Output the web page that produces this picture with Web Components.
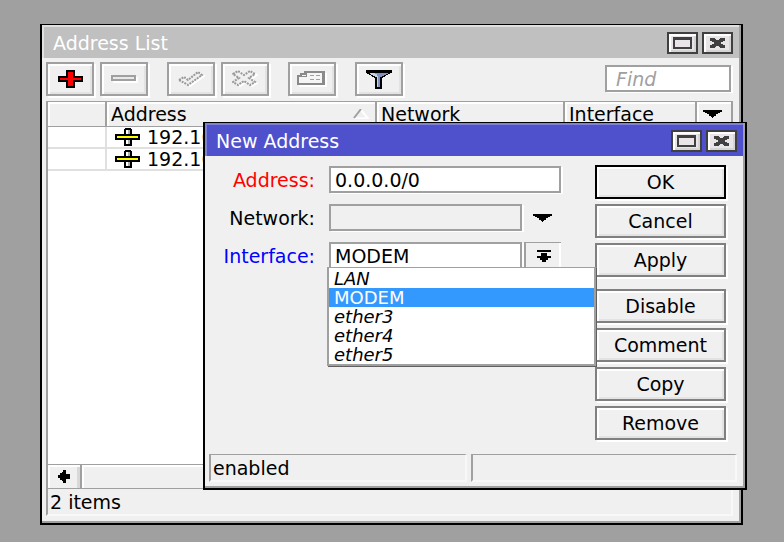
<!DOCTYPE html>
<html lang="en">
<head>
<meta charset="utf-8">
<title>Address List</title>
<style>
    html {
        height: 100%;
    }
    body {
        background: #a0a0a0;
        box-sizing: border-box;
        color: #000;
        display: flex;
        font: 19px/24px "DejaVu Sans", sans-serif;
        height: 100%;
        margin: 0;
        padding: 24px 41px 17px 40px;
    }
    address-list {
        flex: 1;
    }
    address-dialog {
        left: 203px;
        position: absolute;
        right: 37px;
        top: 122px;
    }
</style>
</head>
<body>

<address-list></address-list>
<address-dialog></address-dialog>

<script>
class WinFrameElement extends HTMLElement {
    constructor() {
        super();

        this.attachShadow({ mode: 'open' });

        this.shadowRoot.innerHTML = `
          <style>
              :host {
                background: #f0f0f0;
                border: 2px solid #000;
                border-top-width: 1px;
                box-shadow: inset -2px -2px #a0a0a0;
                box-sizing: border-box;
                display: flex;
                flex-direction: column;
                padding: 0 2px 2px 0;
              }
              .title {
                align-items: center;
                background: var(--title-background, #c0c0c0);
                border-left: 2px solid var(--title-highlight, #e0e0e0);
                border-top: 2px solid var(--title-highlight, #e0e0e0);
                color: #fff;
                display: flex;
                gap: 4px;
                height: 31px;
                padding: 0 6px 0 9px;
              }
              .title__text {
                flex: 1;
                font: inherit;
                margin: 0;
              }
              button {
                align-items: center;
                background: #e8e4e8;
                border: 2px solid #404040;
                box-shadow: inset 2px 2px #fff, inset -2px -2px #d4d4d4;
                display: flex;
                height: 22px;
                justify-content: center;
                padding: 0;
                width: 31px;
              }
          </style>

          <header class="title">
            <h1 class="title__text"></h1>
            <button type="button" aria-label="Maximize">
              <svg width="19" height="12" shape-rendering="crispEdges"><path d="M0 0h19v12h-19zM2 3v7h15v-7z" fill="#404040" fill-rule="evenodd"/></svg>
            </button>
            <button type="button" aria-label="Close">
              <svg width="15" height="10" shape-rendering="crispEdges"><path d="M0 0h5v1h1v1h3v-1h1v-1h5v3h-2v1h-2v2h2v1h2v3h-5v-1h-1v-1h-3v1h-1v1h-5v-3h2v-1h2v-2h-2v-1h-2z" fill="#404040"/></svg>
            </button>
          </header>
          <slot></slot>
        `;
    }

    connectedCallback() {
        this.shadowRoot.querySelector('.title__text').textContent = this.getAttribute('heading');
    }
}

class ToolButtonElement extends HTMLElement {
    constructor() {
        super();

        this.attachShadow({ mode: 'open' });

        this.shadowRoot.innerHTML = `
          <style>
              :host {
                display: block;
              }
              button {
                align-items: center;
                background: #f0f0f0;
                border: 2px solid var(--button-border, #a0a0a0);
                box-shadow: inset 2px 2px #fff, inset -2px -2px #e3e3e3, 2px 2px #fff;
                color: inherit;
                display: flex;
                font: inherit;
                height: 34px;
                justify-content: center;
                padding: 0;
                width: 100%;
              }
          </style>

          <button type="button"><slot></slot></button>
        `;
    }

    connectedCallback() {
        const label = this.getAttribute('label');
        if (label) {
            this.shadowRoot.querySelector('button').setAttribute('aria-label', label);
        }
    }
}

class StatusCellElement extends HTMLElement {
    constructor() {
        super();

        this.attachShadow({ mode: 'open' });

        this.shadowRoot.innerHTML = `
          <style>
              :host {
                border: 2px solid #f8f8f8;
                border-left-color: #a0a0a0;
                border-top: 1px solid #a0a0a0;
                box-sizing: border-box;
                display: block;
                height: 28px;
                padding: 1px 2px;
              }
          </style>

          <slot></slot>
        `;
    }
}

class AddressTableElement extends HTMLElement {
    constructor() {
        super();

        const port = `<svg width="25" height="18" shape-rendering="crispEdges"><path d="M10 0h6v1h1v17h-8v-17h1z"/><path d="M11 2h2v14h-2z" fill="#fff"/><path d="M13 2h2v14h-2z" fill="#b0b0b0"/><path d="M0 6h25v6h-25z"/><path d="M2 8h21v2h-21z" fill="#ff0"/></svg>`;

        this.attachShadow({ mode: 'open' });

        this.shadowRoot.innerHTML = `
          <style>
              :host {
                background: #fff;
                border-left: 2px solid #a0a0a0;
                border-top: 1px solid #a0a0a0;
                box-sizing: border-box;
                display: flex;
                flex-direction: column;
              }
              table {
                border-collapse: separate;
                border-spacing: 0;
                table-layout: fixed;
                width: 100%;
              }
              .flag { width: 59px; }
              .address { width: 270px; }
              .network { width: 188px; }
              .more { width: 36px; }
              th, td {
                box-sizing: border-box;
                font-weight: normal;
                padding: 0 0 0 4px;
                text-align: left;
                white-space: nowrap;
              }
              th {
                background: #f0f0f0;
                border-bottom: 1px solid #a0a0a0;
                border-right: 2px solid #a0a0a0;
                box-shadow: inset 2px 2px #fff;
                height: 25px;
              }
              td {
                border-bottom: 2px solid #e0e0e0;
                height: 22px;
                line-height: 20px;
              }
              td:first-child {
                border-right: 2px solid #e0e0e0;
              }
              .heading, .entry {
                align-items: center;
                display: flex;
                gap: 7px;
              }
              .heading {
                justify-content: space-between;
                padding-right: 6px;
              }
              .entry {
                padding-left: 4px;
              }
              .rows {
                flex: 1;
              }
              .scroll {
                border-top: 1px solid #a0a0a0;
                display: flex;
                height: 23px;
              }
              .scroll button, .menu {
                align-items: center;
                background: #f0f0f0;
                border: 0;
                display: flex;
                justify-content: center;
                padding: 0;
              }
              .scroll button {
                border-right: 2px solid #a0a0a0;
                box-shadow: inset 2px 2px #fff, inset -3px 0 #d8d8d8;
                width: 34px;
              }
              .menu {
                background: none;
                padding-left: 2px;
              }
              .track {
                background: #f0f0f0;
                box-shadow: inset 2px 2px #fff;
                flex: 1;
              }
          </style>

          <div class="rows">
            <table>
              <thead>
                <tr>
                  <th class="flag"></th>
                  <th class="address"><span class="heading">Address <svg width="16" height="10"><path d="M8 1L15 9.5H1" fill="none" stroke="#fff" stroke-width="2"/><path d="M8 0L1 9" fill="none" stroke="#a0a0a0" stroke-width="2"/></svg></span></th>
                  <th class="network">Network</th>
                  <th>Interface</th>
                  <th class="more">
                    <button class="menu" type="button" aria-label="Columns"><svg width="19" height="8" shape-rendering="crispEdges"><path d="M0 0h19v2h-2v1h-2v1h-2v2h-2v1h-1v1h-1v-1h-1v-1h-2v-2h-2v-1h-2v-1h-2z"/></svg></button>
                  </th>
                </tr>
              </thead>
              <tbody>
                <tr><td></td><td><span class="entry">${port}192.16</span></td><td></td><td></td><td></td></tr>
                <tr><td></td><td><span class="entry">${port}192.16</span></td><td></td><td></td><td></td></tr>
              </tbody>
            </table>
          </div>
          <div class="scroll">
            <button type="button" aria-label="Scroll left"><svg width="12" height="13" shape-rendering="crispEdges"><path d="M5 0h3v4h4v5h-4v4h-3v-2h-1v-1h-2v-2h-2v-3h2v-2h2v-1h1z"/></svg></button>
            <div class="track"></div>
          </div>
        `;
    }
}

class AddressListElement extends HTMLElement {
    constructor() {
        super();

        this.attachShadow({ mode: 'open' });

        this.shadowRoot.innerHTML = `
          <style>
              :host {
                display: flex;
              }
              win-frame {
                flex: 1;
              }
              .toolbar {
                display: flex;
                gap: 19px;
                padding: 4px 8px 5px 4px;
              }
              .group {
                display: flex;
                gap: 6px;
              }
              tool-button {
                width: 48px;
              }
              input {
                border: 2px solid #a0a0a0;
                box-shadow: 2px 1px #fff;
                box-sizing: border-box;
                font: inherit;
                font-style: italic;
                height: 27px;
                margin: 3px 0 0 auto;
                padding: 0 9px;
                width: 126px;
              }
              input::placeholder {
                color: #a0a0a0;
                opacity: 1;
              }
              address-table {
                flex: 1;
                margin: 0 6px 0 4px;
              }
              status-cell {
                margin: 0 6px 5px 4px;
              }
          </style>

          <win-frame heading="Address List">
            <div class="toolbar">
              <div class="group">
                <tool-button label="Add">
                  <svg width="25" height="18" shape-rendering="crispEdges"><path d="M8 0h9v6h8v6h-8v6h-9v-6h-8v-6h8z"/><path d="M10 2h5v14h-5z" fill="#f00"/><path d="M2 8h21v2h-21z" fill="#f00"/></svg>
                </tool-button>
                <tool-button label="Remove">
                  <svg width="27" height="8" shape-rendering="crispEdges"><path d="M2 2h25v6h-25z" fill="#fff"/><path d="M1 1h23v4h-23z" fill="#e8e8e8" stroke="#a0a0a0" stroke-width="2"/></svg>
                </tool-button>
              </div>
              <div class="group">
                <tool-button label="Enable">
                  <svg width="27" height="17"><path d="M1 9l5-3 4 3L20 1l4 3L10 14z" transform="translate(2 1)" fill="none" stroke="#fff" stroke-width="2"/><path d="M1 9l5-3 4 3L20 1l4 3L10 14z" fill="#f0f0f0" stroke="#999" stroke-width="2" stroke-dasharray="2 1"/></svg>
                </tool-button>
                <tool-button label="Disable">
                  <svg width="26" height="18"><path d="M1 4l5-3 6 4 6-4 5 3-6 4 6 4-5 3-6-4-6 4-5-3 6-4z" transform="translate(2 1)" fill="none" stroke="#fff" stroke-width="2"/><path d="M1 4l5-3 6 4 6-4 5 3-6 4 6 4-5 3-6-4-6 4-5-3 6-4z" fill="#f0f0f0" stroke="#999" stroke-width="2" stroke-dasharray="2 1"/></svg>
                </tool-button>
              </div>
              <tool-button label="Comment">
                <svg width="30" height="16" shape-rendering="crispEdges"><path d="M2 14h28v2h-28z" fill="#fff"/><path d="M28 2h2v14h-2z" fill="#fff"/><path d="M1 13V5h3V3h4V1h18v12z" fill="#f5f5f5" stroke="#8a8a8a" stroke-width="2"/><path d="M25 0h3v14h-3z" fill="#8a8a8a"/><path d="M2 5h7v-3" fill="none" stroke="#8a8a8a"/><path d="M13 4h4v1h-4zM19 4h4v1h-4zM13 8h4v1h-4zM19 8h4v1h-4z" fill="#a0a0a0"/></svg>
              </tool-button>
              <tool-button label="Filter">
                <svg width="26" height="19" shape-rendering="crispEdges"><path d="M0 0h26v3h-2v1h-2v1h-2v1h-1v1h-2v1h-1v11h-7v-11h-1v-1h-2v-1h-1v-1h-2v-1h-2v-1h-2z"/><path d="M4 3h18v1h-2v1h-2v1h-2v1h-2v10h-3v-10h-2v-1h-2v-1h-2v-1h-1z" fill="#8090c0"/><path d="M4 3h5v1h2v2h1v11h-1v-10h-2v-1h-2v-1h-2v-1h-1z" fill="#c8d0e4"/></svg>
              </tool-button>
              <input type="text" placeholder="Find" aria-label="Find">
            </div>
            <address-table></address-table>
            <status-cell>2 items</status-cell>
          </win-frame>
        `;
    }
}

class FormFieldElement extends HTMLElement {
    constructor() {
        super();

        this.attachShadow({ mode: 'open' });
    }

    connectedCallback() {
        const label = this.getAttribute('label');
        const value = this.getAttribute('value') || '';
        const drop = this.getAttribute('drop');
        const options = (this.getAttribute('options') || '').split(' ').filter(Boolean);

        const control = options.length
            ? `<select id="control">${options.map(o => `<option${o === value ? ' selected' : ''}>${o}</option>`).join('')}</select>`
            : `<input id="control" type="text" value="${value}"${drop ? ' disabled' : ''}>`;

        const arrows = {
            plain: '<svg width="19" height="8" shape-rendering="crispEdges"><path d="M0 0h19v2h-2v1h-2v1h-2v2h-2v1h-1v1h-1v-1h-1v-1h-2v-2h-2v-1h-2v-1h-2z"/></svg>',
            list: '<svg width="14" height="12" shape-rendering="crispEdges"><path d="M0 0h14v2h-14zM4 3h6v3h4v2h-3v2h-2v2h-4v-2h-2v-2h-3v-2h4z"/></svg>'
        };

        this.shadowRoot.innerHTML = `
          <style>
              :host {
                column-gap: 14px;
                display: grid;
                grid-template-columns: 108px minmax(0, 1fr);
              }
              label {
                color: var(--label-color, #000);
                line-height: 29px;
                text-align: right;
              }
              .control {
                align-items: flex-start;
                display: flex;
                gap: 2px;
                position: relative;
              }
              input, select {
                appearance: none;
                background: #fff;
                border: 2px solid #a0a0a0;
                border-radius: 0;
                box-shadow: 2px 1px #fff;
                box-sizing: border-box;
                color: #000;
                flex: 1;
                font: inherit;
                height: 27px;
                min-width: 0;
                padding: 0 4px;
              }
              input:disabled {
                background: #f0f0f0;
              }
              button {
                align-items: center;
                background: #f0f0f0;
                border: 0;
                display: flex;
                height: 27px;
                justify-content: center;
                padding: 0;
                width: 37px;
              }
              .list {
                border-left: 2px solid #a0a0a0;
                border-top: 1px solid #a0a0a0;
                box-shadow: inset -2px 0 #fff;
              }
          </style>

          <label for="control">${label}</label>
          <div class="control">
            ${control}
            ${drop ? `<button class="${drop}" type="button" aria-label="${label} list">${arrows[drop]}</button>` : ''}
            <slot></slot>
          </div>
        `;
    }
}

class OptionListElement extends HTMLElement {
    constructor() {
        super();

        this.attachShadow({ mode: 'open' });

        this.shadowRoot.innerHTML = `
          <style>
              :host {
                background: #fff;
                border: 2px solid #a0a0a0;
                border-top-width: 1px;
                box-shadow: 1px 1px #606060;
                display: block;
                font-size: 18px;
                line-height: 19px;
              }
              ul {
                list-style: none;
                margin: 0;
                padding: 1px 0 0;
              }
              ::slotted(li) {
                font-style: italic;
                padding: 0 5px;
              }
              ::slotted(li[aria-selected="true"]) {
                background: #3399ff;
                color: #fff;
                font-style: normal;
              }
          </style>

          <ul role="listbox" aria-label="Interface"><slot></slot></ul>
        `;
    }
}

class AddressDialogElement extends HTMLElement {
    constructor() {
        super();

        this.attachShadow({ mode: 'open' });

        this.shadowRoot.innerHTML = `
          <style>
              :host {
                --title-background: #4f50cc;
                --title-highlight: #7f80d8;
                display: block;
              }
              .body {
                display: flex;
                gap: 34px;
                padding: 9px 17px 14px 2px;
              }
              .fields {
                display: flex;
                flex: 1;
                flex-direction: column;
                gap: 9px;
                min-width: 0;
                padding-top: 1px;
              }
              .required {
                --label-color: #f00;
              }
              .changed {
                --label-color: #00f;
              }
              option-list {
                left: -2px;
                position: absolute;
                right: -35px;
                top: 25px;
                z-index: 1;
              }
              .actions {
                --button-border: #808080;
                display: flex;
                flex: none;
                flex-direction: column;
                gap: 12px;
                width: 131px;
              }
              .group {
                display: flex;
                flex-direction: column;
                gap: 5px;
              }
              .default {
                --button-border: #000;
              }
              .status {
                display: grid;
                gap: 4px;
                grid-template-columns: 258px 1fr;
                padding: 0 6px 4px 4px;
              }
          </style>

          <win-frame heading="New Address">
            <div class="body">
              <div class="fields">
                <form-field class="required" label="Address:" value="0.0.0.0/0"></form-field>
                <form-field label="Network:" drop="plain"></form-field>
                <form-field class="changed" label="Interface:" value="MODEM" drop="list" options="LAN MODEM ether3 ether4 ether5">
                  <option-list>
                    <li role="option">LAN</li>
                    <li role="option" aria-selected="true">MODEM</li>
                    <li role="option">ether3</li>
                    <li role="option">ether4</li>
                    <li role="option">ether5</li>
                  </option-list>
                </form-field>
              </div>
              <div class="actions">
                <div class="group">
                  <tool-button class="default">OK</tool-button>
                  <tool-button>Cancel</tool-button>
                  <tool-button>Apply</tool-button>
                </div>
                <div class="group">
                  <tool-button>Disable</tool-button>
                  <tool-button>Comment</tool-button>
                  <tool-button>Copy</tool-button>
                  <tool-button>Remove</tool-button>
                </div>
              </div>
            </div>
            <div class="status">
              <status-cell>enabled</status-cell>
              <status-cell></status-cell>
            </div>
          </win-frame>
        `;
    }
}

window.customElements.define('win-frame', WinFrameElement);
window.customElements.define('tool-button', ToolButtonElement);
window.customElements.define('status-cell', StatusCellElement);
window.customElements.define('address-table', AddressTableElement);
window.customElements.define('address-list', AddressListElement);
window.customElements.define('form-field', FormFieldElement);
window.customElements.define('option-list', OptionListElement);
window.customElements.define('address-dialog', AddressDialogElement);
</script>
</body>
</html>
